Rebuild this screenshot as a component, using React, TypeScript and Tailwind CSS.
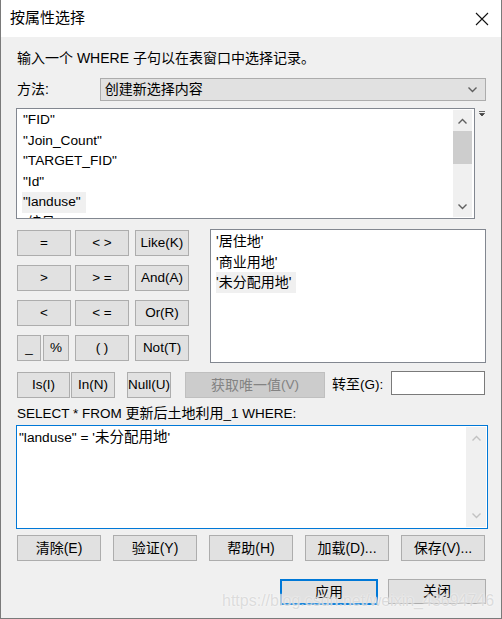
const font = { fontFamily: '"Liberation Sans", Arial, "Noto Sans CJK SC", sans-serif' };

const fields = ['"FID"', '"Join_Count"', '"TARGET_FID"', '"Id"', '"landuse"', '"编号"'];
const values = ["'居住地'", "'商业用地'", "'未分配用地'"];

function Btn({ label, w, className = "" }: { label: string; w: string; className?: string }) {
  return (
    <button
      type="button"
      className={`${w} flex h-[26px] items-center justify-center border border-[#adadad] bg-[#e1e1e1] text-[13.5px] text-black ${className}`}
    >
      {label}
    </button>
  );
}

function Chevron({ up, color = "#606060" }: { up?: boolean; color?: string }) {
  return (
    <svg width="9" height="6" viewBox="0 0 9 6">
      <path d={up ? "M0.5 5.5 L4.5 1.5 L8.5 5.5" : "M0.5 0.5 L4.5 4.5 L8.5 0.5"} fill="none" stroke={color} strokeWidth="1.4" />
    </svg>
  );
}

export default function App() {
  return (
    <div style={font} className="relative h-[619px] w-[502px] overflow-hidden border border-t-0 border-[#7a7a7a] bg-[#f0f0f0] text-black">
      <div className="flex h-[37px] items-center justify-between bg-white pl-[9px] pr-[12px]">
        <span className="text-[15px]">按属性选择</span>
        <svg width="14" height="14" viewBox="0 0 14 14">
          <path d="M1 1 L13 13 M13 1 L1 13" stroke="#111" strokeWidth="1.1" />
        </svg>
      </div>

      <div className="px-[15px]">
        <div className="mt-[11px] h-[20px] pl-[1px] text-[14px] leading-[20px]">输入一个 WHERE 子句以在表窗口中选择记录。</div>

        <div className="mt-[10px] flex h-[23px] items-center">
          <span className="w-[84px] pl-[1px] text-[14px]">方法:</span>
          <div className="flex h-[23px] w-[387px] items-center justify-between border border-[#acacac] bg-[#e1e1e1] pl-[4px] pr-[8px] text-[14px]">
            <span>创建新选择内容</span>
            <Chevron />
          </div>
        </div>

        <div className="mt-[7px] flex">
          <div className="flex h-[111px] w-[459px] border border-[#828790] bg-white">
            <div className="flex-1 overflow-hidden pl-[5px] pt-[1px] text-[13.7px]">
              {fields.map((f, i) => (
                <div key={f} className="h-[20.5px] leading-[20.5px]">
                  <span className={i === 4 ? "inline-block bg-[#f0f0f0] pl-[1px] pr-[5px]" : "pl-[1px]"}>{f}</span>
                </div>
              ))}
            </div>
            <div className="my-[1px] mr-[2px] flex w-[19px] flex-col bg-[#f0f0f0]">
              <div className="flex h-[21px] items-center justify-center"><Chevron up /></div>
              <div className="h-[33px] bg-[#cdcdcd]" />
              <div className="flex-1" />
              <div className="flex h-[20px] items-center justify-center"><Chevron /></div>
            </div>
          </div>
          <svg className="ml-[4px] mt-[3px]" width="6" height="6" viewBox="0 0 6 6">
            <path d="M0 0.5 H6 M0.5 2.5 H5.5 L3 5 Z" stroke="#444" strokeWidth="0.8" fill="#444" />
          </svg>
        </div>

        <div className="mt-[10px] flex">
          <div className="flex w-[194px] flex-col gap-[9px] pl-[1px] pt-[1px]">
            <div className="flex">
              <Btn label="=" w="w-[54px]" />
              <Btn label="< >" w="w-[54px]" className="ml-[4px]" />
              <Btn label="Like(K)" w="w-[54px]" className="ml-[6px]" />
            </div>
            <div className="flex">
              <Btn label=">" w="w-[54px]" />
              <Btn label="> =" w="w-[54px]" className="ml-[4px]" />
              <Btn label="And(A)" w="w-[54px]" className="ml-[6px]" />
            </div>
            <div className="flex">
              <Btn label="<" w="w-[54px]" />
              <Btn label="< =" w="w-[54px]" className="ml-[4px]" />
              <Btn label="Or(R)" w="w-[54px]" className="ml-[6px]" />
            </div>
            <div className="flex">
              <Btn label="_" w="w-[24px]" />
              <Btn label="%" w="w-[26px]" className="ml-[2px]" />
              <Btn label="( )" w="w-[54px]" className="ml-[6px]" />
              <Btn label="Not(T)" w="w-[54px]" className="ml-[6px]" />
            </div>
          </div>
          <div className="h-[134px] w-[276px] border border-[#828790] bg-white pl-[5px] pt-[1px] text-[14px]">
            {values.map((v, i) => (
              <div key={v} className="h-[20.5px] leading-[20.5px]">
                <span className={i === 2 ? "inline-block bg-[#f0f0f0] pr-[5px]" : ""}>{v}</span>
              </div>
            ))}
          </div>
        </div>

        <div className="mt-[8px] flex h-[27px] items-start">
          <Btn label="Is(I)" w="w-[53px]" className="ml-[1px] mt-[1px]" />
          <Btn label="In(N)" w="w-[44px]" className="ml-[1px] mt-[1px]" />
          <Btn label="Null(U)" w="w-[44px]" className="ml-[12px] mt-[1px]" />
          <div className="ml-[14px] mt-[1px] flex h-[26px] w-[140px] items-center justify-center border border-[#bfbfbf] bg-[#cccccc] text-[14px] text-[#838383]">
            获取唯一值<span className="text-[13.5px]">(V)</span>
          </div>
          <span className="ml-[7px] mt-[3px] text-[14px]">转至<span className="text-[13.5px]">(G):</span></span>
          <div className="ml-auto mr-[1px] h-[24px] w-[94px] border border-[#7a7a7a] bg-white" />
        </div>

        <div className="mt-[5px] h-[20px] pl-[1px] text-[13.5px] leading-[20px]">
          SELECT * FROM <span className="text-[14px]">更新后土地利用</span>_1 WHERE:
        </div>

        <div className="mt-[2px] flex h-[104px] w-[472px] border border-[#0078d7] bg-white">
          <div className="flex-1 pl-[2px] pt-[2px] text-[13.7px] leading-[18px]">
            "landuse" = '<span className="text-[14.5px]">未分配用地</span>'
          </div>
          <div className="my-[1px] mr-[1px] flex w-[20px] flex-col justify-between bg-[#f0f0f0] py-[8px]">
            <div className="flex justify-center"><Chevron up color="#c2c2c2" /></div>
            <div className="flex justify-center"><Chevron color="#c2c2c2" /></div>
          </div>
        </div>

        <div className="mt-[6px] flex gap-[12px] pl-[1px] text-[14px]">
          {["清除(E)", "验证(Y)", "帮助(H)", "加载(D)...", "保存(V)..."].map((t) => (
            <button key={t} type="button" className="flex h-[26px] w-[84px] items-center justify-center border border-[#adadad] bg-[#e1e1e1]">
              {t}
            </button>
          ))}
        </div>

        <div className="mt-[18px] flex justify-end gap-[10px]">
          <button type="button" className="flex h-[26px] w-[98px] items-center justify-center border-2 border-[#0078d7] bg-[#e1e1e1] text-[14px]">
            应用
          </button>
          <button type="button" className="flex h-[25px] w-[98px] items-center justify-center border border-[#adadad] bg-[#e1e1e1] text-[14px]">
            关闭
          </button>
        </div>
      </div>

      <div
        className="pointer-events-none absolute left-[221px] top-[589px] text-[16px] text-[#d4d4d4]/80"
        style={{ textShadow: "0 0 2px #fff" }}
      >
        https://blog.csdn.net/weixin_43694746
      </div>
    </div>
  );
}
